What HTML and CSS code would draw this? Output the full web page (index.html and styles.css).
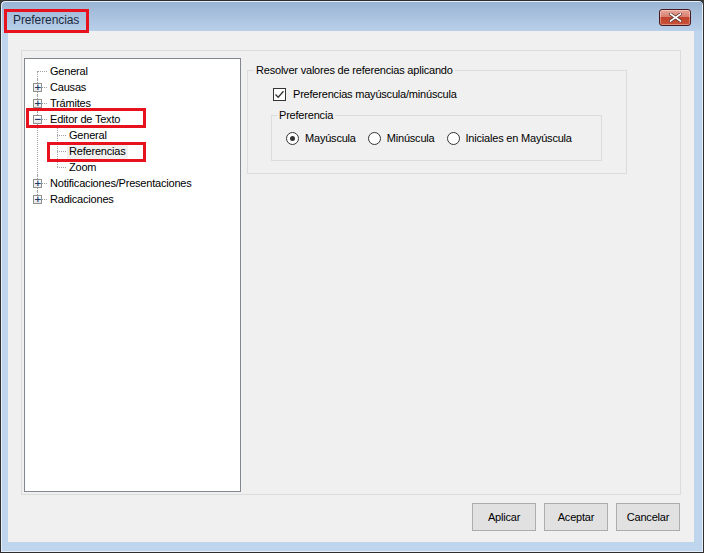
FILE: index.html
```html
<!DOCTYPE html>
<html lang="es">
<head>
    <meta charset="UTF-8">
    <title>Preferencias</title>
    <link rel="stylesheet" href="styles.css">
</head>
<body>
    <div class="window">
        <div class="titlebar">
            <span class="title">Preferencias</span>
            <button class="close" aria-label="Cerrar">
                <svg width="13" height="9" viewBox="0 0 13 9">
                    <path d="M1.5 1 L11.5 8 M11.5 1 L1.5 8" stroke="#5a3030" stroke-width="3.2" stroke-linecap="square"/>
                    <path d="M1.5 1 L11.5 8 M11.5 1 L1.5 8" stroke="#fff" stroke-width="1.6" stroke-linecap="square"/>
                </svg>
            </button>
        </div>
        <div class="client">
            <div class="panel">
                <div class="tree">
                    <ul class="level1">
                        <li class="node leaf first"><span class="label">General</span></li>
                        <li class="node closed"><span class="toggle">+</span><span class="label">Causas</span></li>
                        <li class="node closed"><span class="toggle">+</span><span class="label">Trámites</span></li>
                        <li class="node open">
                            <span class="mark mark-editor"></span>
                            <span class="toggle">−</span><span class="label">Editor de Texto</span>
                            <ul class="level2">
                                <li class="node leaf"><span class="label">General</span></li>
                                <li class="node leaf"><span class="mark mark-ref"></span><span class="label selected">Referencias</span></li>
                                <li class="node leaf last"><span class="label">Zoom</span></li>
                            </ul>
                        </li>
                        <li class="node closed"><span class="toggle">+</span><span class="label">Notificaciones/Presentaciones</span></li>
                        <li class="node closed last"><span class="toggle">+</span><span class="label">Radicaciones</span></li>
                    </ul>
                </div>
                <div class="settings">
                    <div class="group outer">
                        <span class="legend">Resolver valores de referencias aplicando</span>
                        <label class="check">
                            <span class="checkbox">
                                <svg width="11" height="11" viewBox="0 0 11 11"><path d="M1.5 5.5 L4.2 8.3 L9.5 2.2" fill="none" stroke="#333" stroke-width="1.3"/></svg>
                            </span>
                            Preferencias mayúscula/minúscula
                        </label>
                        <div class="group inner">
                            <span class="legend">Preferencia</span>
                            <div class="radios">
                                <label class="radio"><span class="dot checked"></span>Mayúscula</label>
                                <label class="radio"><span class="dot"></span>Minúscula</label>
                                <label class="radio"><span class="dot"></span>Iniciales en Mayúscula</label>
                            </div>
                        </div>
                    </div>
                </div>
            </div>
            <div class="actions">
                <button class="btn">Aplicar</button>
                <button class="btn">Aceptar</button>
                <button class="btn">Cancelar</button>
            </div>
        </div>
    </div>
</body>
</html>
```

FILE: styles.css
```css
body {
    margin: 0;
    font-family: "Liberation Sans", Arial, sans-serif;
    font-size: 11px;
    letter-spacing: -0.2px;
    color: #000;
    background: #3a3a3a;
}

.window {
    width: 704px;
    height: 553px;
    box-sizing: border-box;
    border: 1px solid #2e2e2e;
    border-radius: 5px 5px 0 0;
    background: linear-gradient(#98b3d3 0, #b9d0ea 30px, #bfd5ee 30px);
    padding: 0 9px 10px 7px;
    display: flex;
    flex-direction: column;
    box-shadow: inset 1px 1px 0 #e6eef8, inset -1px -1px 0 #e6eef8;
}

.titlebar {
    height: 30px;
    display: flex;
    align-items: center;
    justify-content: space-between;
    position: relative;
}

.title {
    font-size: 12px;
    letter-spacing: -0.1px;
    color: #1a2a40;
    margin-left: 5px;
    margin-top: 8px;
}

/* red highlight round the title */
.titlebar::before {
    content: "";
    position: absolute;
    left: -4px;
    top: 8px;
    width: 85px;
    height: 24px;
    border: 3px solid #e8121f;
    box-sizing: border-box;
}

.close {
    width: 32px;
    height: 17px;
    margin-top: 2px;
    margin-right: 3px;
    border: 1px solid #4a1a1f;
    border-radius: 3px;
    padding: 0;
    background: linear-gradient(#e9a59a 0, #d8806f 45%, #c2432b 50%, #c9523a 100%);
    display: flex;
    align-items: center;
    justify-content: center;
    box-shadow: inset 0 0 0 1px rgba(255, 255, 255, 0.35);
}

.client {
    flex: 1;
    background: #f0f0f0;
    padding: 19px 13px 0 13px;
    display: flex;
    flex-direction: column;
}

.panel {
    height: 445px;
    box-sizing: border-box;
    border: 1px solid #dcdcdc;
    padding: 7px 2px 2px 2px;
    display: flex;
}

/* tree */
.tree {
    width: 217px;
    box-sizing: border-box;
    border: 1px solid #828790;
    background: #fff;
    padding-top: 4px;
}

.tree ul {
    list-style: none;
    margin: 0;
    padding: 0;
}

.node {
    position: relative;
    line-height: 16px;
}

.node > .label {
    display: inline-block;
    padding: 0 2px;
    height: 16px;
    line-height: 16px;
    position: relative;
}

.level1 > .node > .label {
    margin-left: 23px;
}

.level2 > .node > .label {
    margin-left: 42px;
}

/* dotted connectors */
.level1 > .node::before {
    content: "";
    position: absolute;
    left: 12px;
    top: 8px;
    width: 10px;
    border-top: 1px dotted #a0a0a0;
}

.level1 > .node::after {
    content: "";
    position: absolute;
    left: 12px;
    top: 0;
    bottom: 0;
    border-left: 1px dotted #a0a0a0;
}

.level1 > .node.first::after {
    top: 8px;
}

.level1 > .node.last::after {
    bottom: auto;
    height: 8px;
}

.level2 > .node::before {
    content: "";
    position: absolute;
    left: 32px;
    top: 8px;
    width: 9px;
    border-top: 1px dotted #a0a0a0;
}

.level2 > .node::after {
    content: "";
    position: absolute;
    left: 32px;
    top: 0;
    bottom: 0;
    border-left: 1px dotted #a0a0a0;
}

.level2 > .node.last::after {
    bottom: auto;
    height: 8px;
}

.toggle {
    position: absolute;
    left: 8px;
    top: 4px;
    width: 7px;
    height: 7px;
    border: 1px solid #919191;
    background: linear-gradient(#fff, #e6e6e6);
    z-index: 1;
    font-size: 9px;
    line-height: 7px;
    text-align: center;
    color: #1d3a6b;
    font-family: "DejaVu Sans", sans-serif;
    font-weight: bold;
    letter-spacing: 0;
    overflow: hidden;
}

.selected {
    background: #f0f0f0;
}

/* red highlight boxes in the tree */
.mark {
    position: absolute;
    height: 20px;
    z-index: 2;
    border: 3px solid #e8121f;
    box-sizing: border-box;
    pointer-events: none;
}

.mark-editor {
    left: 1px;
    top: -3px;
    width: 120px;
}

.mark-ref {
    left: 22px;
    top: -1px;
    width: 99px;
}

/* settings */
.settings {
    flex: 1;
    padding: 12px 0 0 6px;
}

.group {
    position: relative;
    border: 1px solid #dcdcdc;
    box-sizing: border-box;
}

.legend {
    position: absolute;
    top: -8px;
    left: 6px;
    padding: 0 2px;
    background: #f0f0f0;
    line-height: 15px;
    white-space: nowrap;
}

.group.outer {
    width: 380px;
    height: 104px;
    padding: 16px 0 0 25px;
}

.check {
    display: flex;
    align-items: center;
    height: 14px;
}

.checkbox {
    width: 11px;
    height: 11px;
    border: 1px solid #333;
    background: #fff;
    margin-right: 7px;
    display: flex;
}

.group.inner {
    width: 331px;
    height: 46px;
    margin: 14px 0 0 -2px;
    padding: 14px 0 0 14px;
}

.group.inner > .legend {
    left: 5px;
}

.radios {
    display: flex;
    align-items: center;
    height: 16px;
    white-space: nowrap;
}

.radio {
    display: flex;
    align-items: center;
    margin-right: 12px;
}

.dot {
    width: 11px;
    height: 11px;
    border: 1px solid #333;
    border-radius: 50%;
    background: #fff;
    margin-right: 6px;
    position: relative;
}

.dot.checked::after {
    content: "";
    position: absolute;
    left: 3px;
    top: 3px;
    width: 5px;
    height: 5px;
    border-radius: 50%;
    background: #333;
}

/* buttons */
.actions {
    display: flex;
    justify-content: flex-end;
    gap: 8px;
    padding-top: 8px;
    padding-right: 1px;
}

.btn {
    width: 64px;
    height: 28px;
    font-family: "Liberation Sans", Arial, sans-serif;
    font-size: 11px;
    letter-spacing: -0.2px;
    border: 1px solid #adadad;
    background: #e1e1e1;
    color: #000;
    padding: 0;
}
```
